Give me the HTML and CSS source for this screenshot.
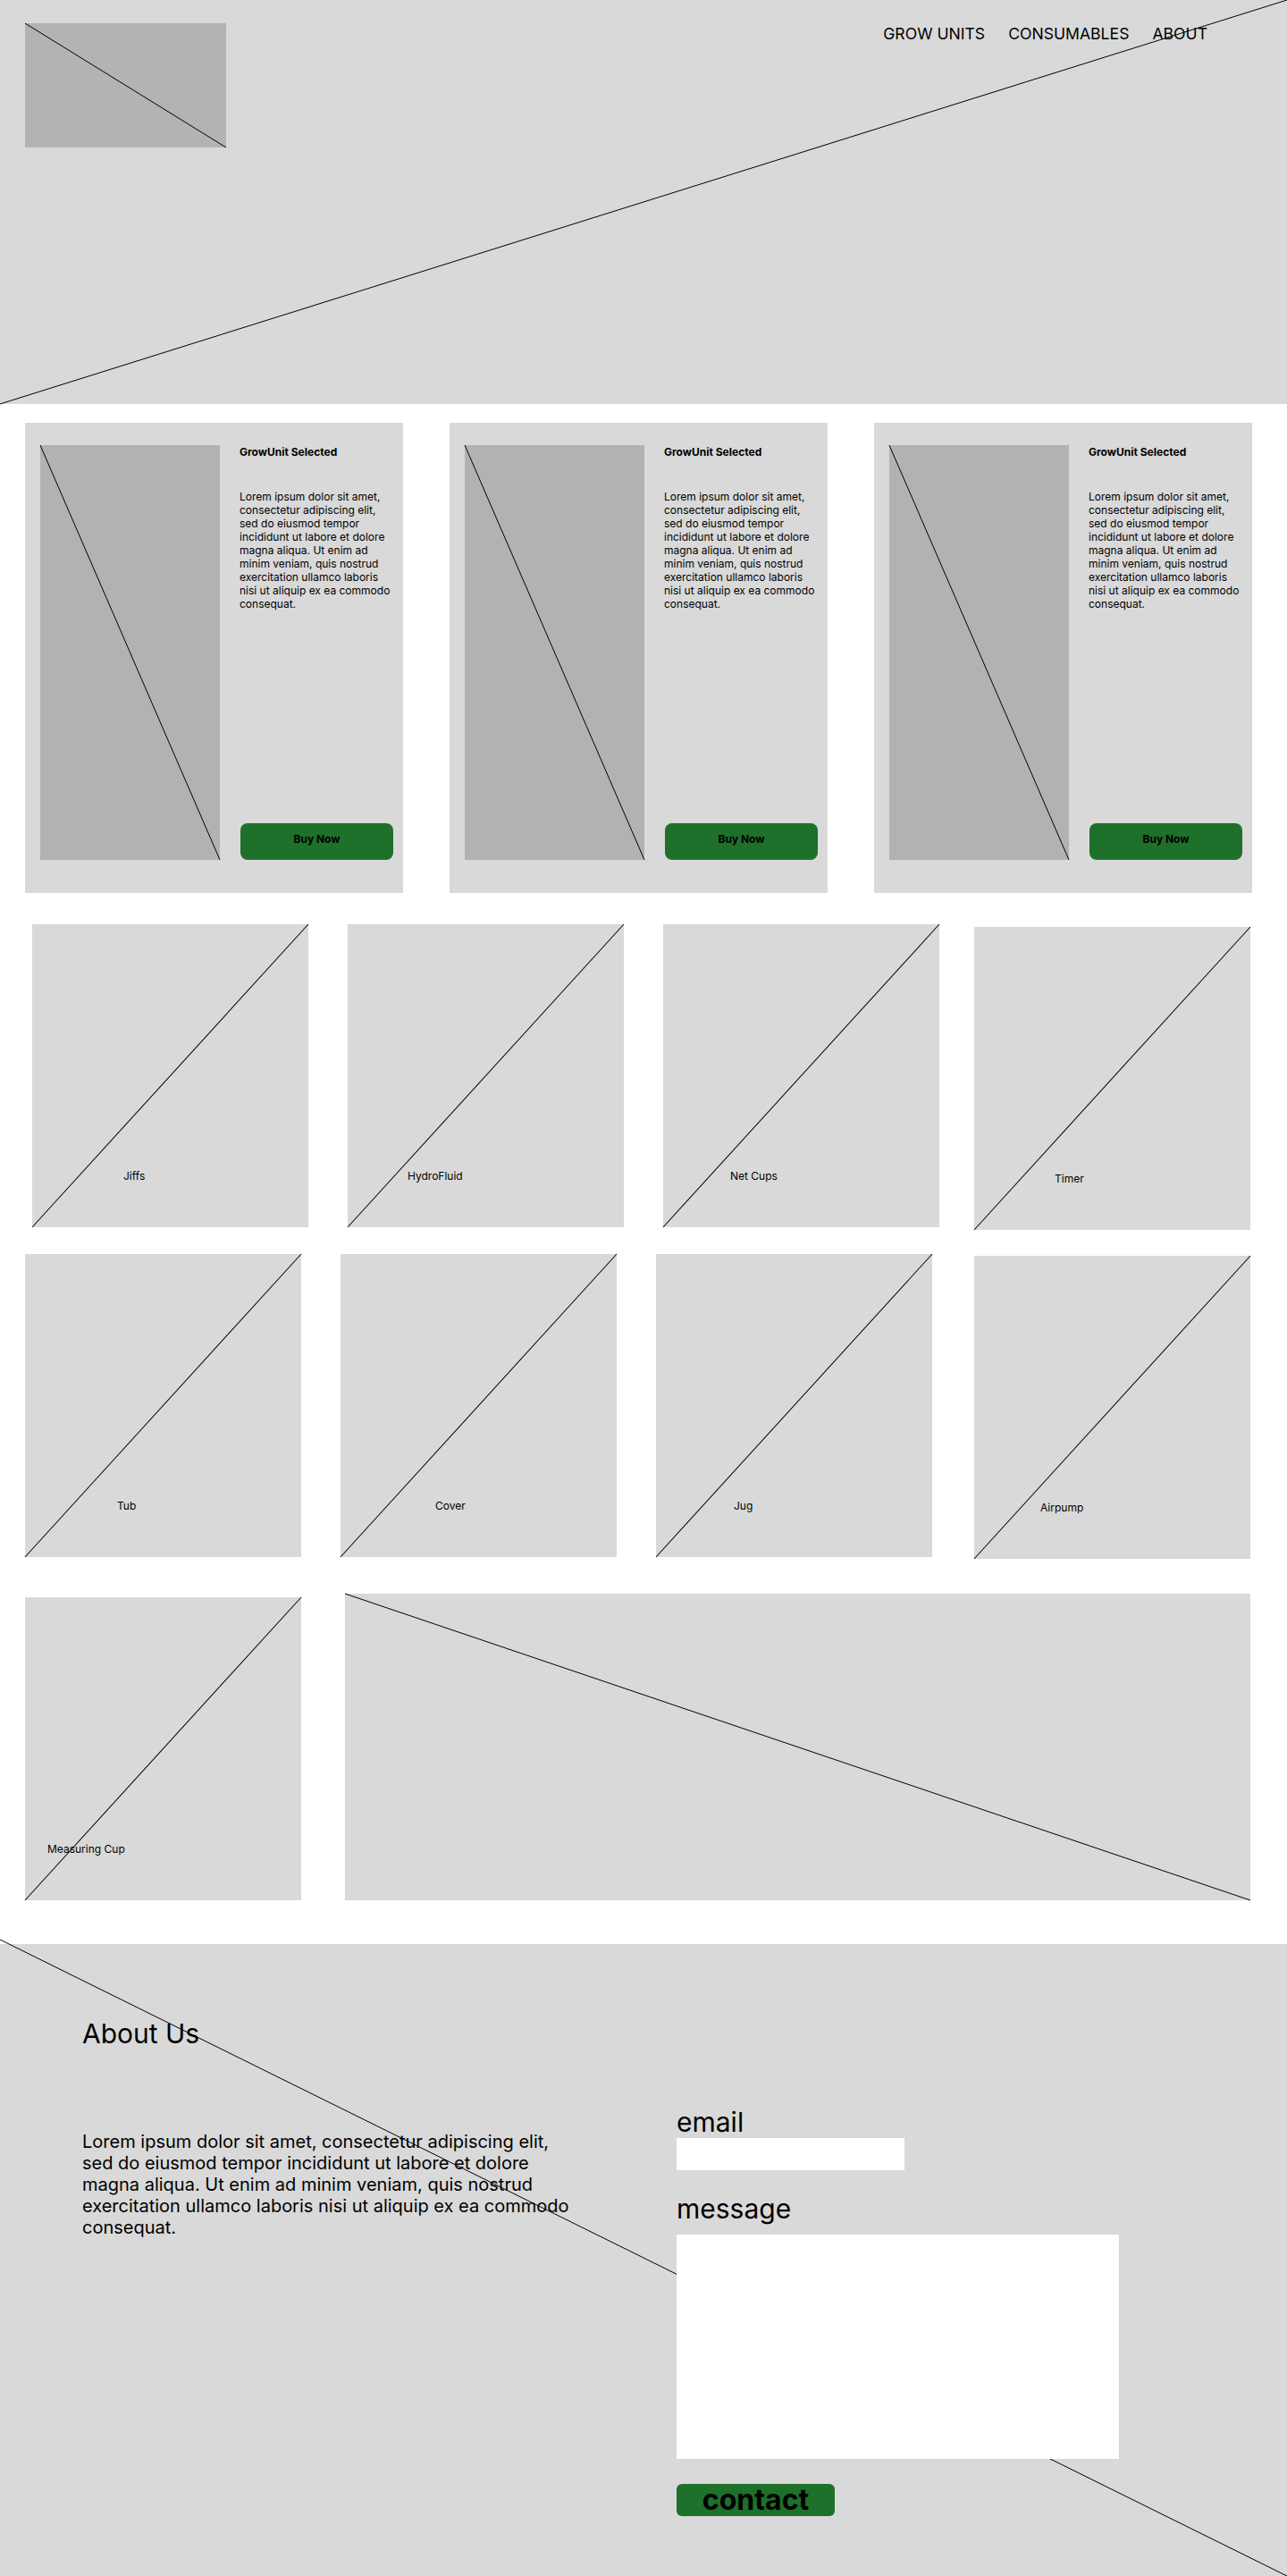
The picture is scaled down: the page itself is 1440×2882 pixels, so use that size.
FILE: index.html
```html
<!DOCTYPE html>
<html lang="en">
<head>
    <meta charset="UTF-8">
    <meta name="viewport" content="width=device-width, initial-scale=1.0">
    <title>GrowUnit Shop</title>
    <link rel="stylesheet" href="styles.css">
</head>
<body>

    <header class="hero">
        <div class="logo">
            <svg class="x-line" viewBox="0 0 100 100" preserveAspectRatio="none"><line x1="0" y1="0" x2="100" y2="100"/></svg>
        </div>
        <nav class="main-nav">
            <a href="#">GROW UNITS</a>
            <a href="#">CONSUMABLES</a>
            <a href="#">ABOUT</a>
        </nav>
        <svg class="x-line hero-line" viewBox="0 0 100 100" preserveAspectRatio="none"><line x1="0" y1="100" x2="100" y2="0"/></svg>
    </header>

    <section class="units">
        <div class="unit-card">
            <div class="unit-img">
                <svg class="x-line" viewBox="0 0 100 100" preserveAspectRatio="none"><line x1="0" y1="0" x2="100" y2="100"/></svg>
            </div>
            <div class="unit-body">
                <h3>GrowUnit Selected</h3>
                <p>Lorem ipsum dolor sit amet, consectetur adipiscing elit, sed do eiusmod tempor incididunt ut labore et dolore magna aliqua. Ut enim ad minim veniam, quis nostrud exercitation ullamco laboris nisi ut aliquip ex ea commodo consequat.</p>
                <button class="buy-btn">Buy Now</button>
            </div>
        </div>
        <div class="unit-card">
            <div class="unit-img">
                <svg class="x-line" viewBox="0 0 100 100" preserveAspectRatio="none"><line x1="0" y1="0" x2="100" y2="100"/></svg>
            </div>
            <div class="unit-body">
                <h3>GrowUnit Selected</h3>
                <p>Lorem ipsum dolor sit amet, consectetur adipiscing elit, sed do eiusmod tempor incididunt ut labore et dolore magna aliqua. Ut enim ad minim veniam, quis nostrud exercitation ullamco laboris nisi ut aliquip ex ea commodo consequat.</p>
                <button class="buy-btn">Buy Now</button>
            </div>
        </div>
        <div class="unit-card">
            <div class="unit-img">
                <svg class="x-line" viewBox="0 0 100 100" preserveAspectRatio="none"><line x1="0" y1="0" x2="100" y2="100"/></svg>
            </div>
            <div class="unit-body">
                <h3>GrowUnit Selected</h3>
                <p>Lorem ipsum dolor sit amet, consectetur adipiscing elit, sed do eiusmod tempor incididunt ut labore et dolore magna aliqua. Ut enim ad minim veniam, quis nostrud exercitation ullamco laboris nisi ut aliquip ex ea commodo consequat.</p>
                <button class="buy-btn">Buy Now</button>
            </div>
        </div>
    </section>

    <section class="consumables">
        <div class="tile-row row-1">
            <div class="tile">
                <svg class="x-line" viewBox="0 0 100 100" preserveAspectRatio="none"><line x1="0" y1="100" x2="100" y2="0"/></svg>
                <span class="tile-label jiffs">Jiffs</span>
            </div>
            <div class="tile">
                <svg class="x-line" viewBox="0 0 100 100" preserveAspectRatio="none"><line x1="0" y1="100" x2="100" y2="0"/></svg>
                <span class="tile-label hydro">HydroFluid</span>
            </div>
            <div class="tile">
                <svg class="x-line" viewBox="0 0 100 100" preserveAspectRatio="none"><line x1="0" y1="100" x2="100" y2="0"/></svg>
                <span class="tile-label netcups">Net Cups</span>
            </div>
            <div class="tile">
                <svg class="x-line" viewBox="0 0 100 100" preserveAspectRatio="none"><line x1="0" y1="100" x2="100" y2="0"/></svg>
                <span class="tile-label timer">Timer</span>
            </div>
        </div>
        <div class="tile-row row-2">
            <div class="tile">
                <svg class="x-line" viewBox="0 0 100 100" preserveAspectRatio="none"><line x1="0" y1="100" x2="100" y2="0"/></svg>
                <span class="tile-label tub">Tub</span>
            </div>
            <div class="tile">
                <svg class="x-line" viewBox="0 0 100 100" preserveAspectRatio="none"><line x1="0" y1="100" x2="100" y2="0"/></svg>
                <span class="tile-label cover">Cover</span>
            </div>
            <div class="tile">
                <svg class="x-line" viewBox="0 0 100 100" preserveAspectRatio="none"><line x1="0" y1="100" x2="100" y2="0"/></svg>
                <span class="tile-label jug">Jug</span>
            </div>
            <div class="tile">
                <svg class="x-line" viewBox="0 0 100 100" preserveAspectRatio="none"><line x1="0" y1="100" x2="100" y2="0"/></svg>
                <span class="tile-label airpump">Airpump</span>
            </div>
        </div>
        <div class="tile-row row-3">
            <div class="tile">
                <svg class="x-line" viewBox="0 0 100 100" preserveAspectRatio="none"><line x1="0" y1="100" x2="100" y2="0"/></svg>
                <span class="tile-label cup">Measuring Cup</span>
            </div>
            <div class="banner">
                <svg class="x-line" viewBox="0 0 100 100" preserveAspectRatio="none"><line x1="0" y1="0" x2="100" y2="100"/></svg>
            </div>
        </div>
    </section>

    <section class="about">
        <svg class="x-line about-line" viewBox="0 0 100 100" preserveAspectRatio="none"><line x1="0" y1="0" x2="100" y2="100"/></svg>
        <div class="about-text">
            <h2>About Us</h2>
            <p>Lorem ipsum dolor sit amet, consectetur adipiscing elit, sed do eiusmod tempor incididunt ut labore et dolore magna aliqua. Ut enim ad minim veniam, quis nostrud exercitation ullamco laboris nisi ut aliquip ex ea commodo consequat.</p>
        </div>
        <form class="contact-form">
            <label for="email">email</label>
            <input type="text" id="email">
            <label for="message" class="msg-label">message</label>
            <textarea id="message"></textarea>
            <button type="button" class="contact-btn">contact</button>
        </form>
    </section>

</body>
</html>
```

FILE: styles.css
```css
/* Grundlayout */
body {
    margin: 0;
    font-family: Inter, "Noto Sans", sans-serif;
    color: #000000;
    background-color: #ffffff;
}

/* Diagonale Platzhalter-Linien */
.x-line {
    position: absolute;
    top: 0;
    left: 0;
    width: 100%;
    height: 100%;
    pointer-events: none;
    overflow: visible;
}

.x-line line {
    stroke: #000000;
    stroke-width: 1;
    vector-effect: non-scaling-stroke;
}

/* Header */
.hero {
    position: relative;
    height: 452px;
    box-sizing: border-box;
    padding: 26px 89px 0 28px;
    background-color: #d9d9d9;
    display: flex;
    justify-content: space-between;
    align-items: flex-start;
}

.logo {
    position: relative;
    width: 225px;
    height: 139px;
    background-color: #b4b3b3;
}

.main-nav {
    display: flex;
    gap: 26px;
    margin-top: 1px;
    font-size: 17.6px;
}

.main-nav a {
    color: #000000;
    text-decoration: none;
}

.hero-line {
    z-index: 1;
}

/* GrowUnit Karten */
.units {
    display: flex;
    gap: 52px;
    padding: 21px 0 0 28px;
}

.unit-card {
    width: 423px;
    height: 526px;
    box-sizing: border-box;
    padding: 25px 11px 37px 17px;
    background-color: #d9d9d9;
    display: flex;
    gap: 22px;
}

.unit-img {
    position: relative;
    flex: none;
    width: 201px;
    height: 464px;
    background-color: #b3b2b0;
}

.unit-body {
    flex: 1;
    display: flex;
    flex-direction: column;
}

.unit-body h3 {
    margin: 0 0 35px;
    font-size: 12px;
    font-weight: 700;
    line-height: 15px;
}

.unit-body p {
    margin: 0;
    font-size: 12px;
    line-height: 15px;
}

.buy-btn {
    margin-top: auto;
    margin-left: 1px;
    width: 171px;
    height: 41px;
    padding: 0 0 7px;
    border: none;
    border-radius: 8px;
    background-color: #1e702a;
    color: #000000;
    font-family: inherit;
    font-size: 12px;
    font-weight: 700;
}

/* Verbrauchsmaterial-Kacheln */
.consumables {
    padding-top: 35px;
}

.tile-row {
    display: flex;
    align-items: flex-start;
    gap: 44px;
}

.tile {
    position: relative;
    flex: none;
    width: 309px;
    height: 339px;
    background-color: #d9d9d9;
    font-size: 12px;
}

.tile-label {
    display: inline-block;
    margin-top: 274px;
}

.row-1 {
    padding-left: 36px;
}

.row-1 .tile:last-child {
    margin-left: -5px;
    margin-top: 3px;
}

.row-2 {
    margin-top: 27px;
    padding-left: 28px;
}

.row-2 .tile:last-child {
    margin-left: 3px;
    margin-top: 2px;
}

.row-3 {
    margin-top: 39px;
    padding-left: 28px;
    gap: 49px;
}

.row-3 .tile {
    margin-top: 4px;
}

.jiffs { margin-left: 102px; }
.hydro { margin-left: 67px; }
.netcups { margin-left: 75px; }
.timer { margin-left: 90px; }
.tub { margin-left: 103px; }
.cover { margin-left: 106px; }
.jug { margin-left: 87px; }
.airpump { margin-left: 74px; }
.cup { margin-left: 25px; }

.banner {
    position: relative;
    width: 1013px;
    height: 343px;
    background-color: #d9d9d9;
}

/* Über uns / Kontakt */
.about {
    position: relative;
    margin-top: 49px;
    height: 707px;
    box-sizing: border-box;
    padding: 82px 0 0 92px;
    background-color: #d9d9d9;
    display: grid;
    grid-template-columns: 665px 1fr;
    align-items: start;
}

.about-line {
    top: -5px;
    height: calc(100% + 5px);
}

.about-text,
.contact-form {
    position: relative;
    z-index: 1;
}

.about-text h2 {
    margin: 0;
    font-size: 30px;
    font-weight: 400;
}

.about-text p {
    width: 550px;
    margin: 91px 0 0;
    font-size: 20px;
    line-height: 24px;
}

.contact-form {
    display: flex;
    flex-direction: column;
    align-items: flex-start;
    padding-top: 99px;
}

.contact-form label {
    font-size: 30px;
}

.contact-form input {
    width: 255px;
    height: 36px;
    box-sizing: border-box;
    border: none;
    background-color: #ffffff;
}

.contact-form .msg-label {
    margin-top: 25px;
}

.contact-form textarea {
    margin-top: 11px;
    width: 495px;
    height: 251px;
    box-sizing: border-box;
    border: none;
    resize: none;
    background-color: #ffffff;
}

.contact-btn {
    margin-top: 28px;
    width: 177px;
    height: 36px;
    padding: 0;
    border: none;
    border-radius: 6px;
    background-color: #1e702a;
    color: #000000;
    font-family: inherit;
    font-size: 32px;
    font-weight: 700;
    line-height: 36px;
}
```
